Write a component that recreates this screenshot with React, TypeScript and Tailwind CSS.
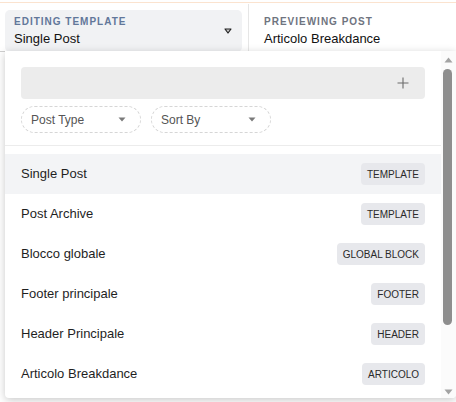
import type { JSX } from "react";

interface TemplateRow {
  name: string;
  kind: string;
}

const ROWS: TemplateRow[] = [
  { name: "Single Post", kind: "Template" },
  { name: "Post Archive", kind: "Template" },
  { name: "Blocco globale", kind: "Global Block" },
  { name: "Footer principale", kind: "Footer" },
  { name: "Header Principale", kind: "Header" },
  { name: "Articolo Breakdance", kind: "Articolo" },
];

function Caret(): JSX.Element {
  return (
    <svg width="8" height="5" viewBox="0 0 8 5" className="shrink-0">
      <path d="M0.5 0.5 H7.5 L4 4.5 Z" fill="#7a7a7a" />
    </svg>
  );
}

function FilterPill({ label }: { label: string }): JSX.Element {
  return (
    <div className="flex h-[27px] w-[120px] items-center justify-between rounded-full border border-dashed border-[#d6d6d6] pl-[9px] pr-[14px] text-[12px] text-[#555]">
      <span>{label}</span>
      <Caret />
    </div>
  );
}

// Scrollbar drawn by hand: the screenshot browser hides native ones
function Scrollbar(): JSX.Element {
  return (
    <div className="flex w-[15px] shrink-0 flex-col items-center bg-[#fbfbfb] pb-[2px] pt-[6px]">
      <svg width="9" height="6" viewBox="0 0 9 6">
        <path d="M4.5 0.5 L8.5 5.5 H0.5 Z" fill="#a3a3a3" />
      </svg>
      <div className="ml-[-2px] mt-[6px] h-[256px] w-[9px] rounded-full bg-[#8e8e8e]" />
      <div className="flex-1" />
      <svg width="9" height="6" viewBox="0 0 9 6" className="mb-[1px]">
        <path d="M0.5 0.5 H8.5 L4.5 5.5 Z" fill="#a3a3a3" />
      </svg>
    </div>
  );
}

export default function App(): JSX.Element {
  return (
    <div
      className="relative h-[402px] w-[456px] overflow-hidden bg-white pt-[2px]"
      style={{ fontFamily: '"Liberation Sans", Arial, sans-serif' }}
    >
      {/* Top bar */}
      <header className="flex h-[49px] border-t border-[#fbe3cf] pl-[5px]">
        <div className="mt-[7px] flex h-[42px] w-[237px] items-start justify-between rounded-[5px] bg-[#f1f2f4] pl-[9px] pr-[10px] pt-[5px]">
          <div className="flex flex-col">
            <span className="text-[10px] font-bold uppercase leading-[14px] tracking-[1px] text-[#62779a]">
              Editing template
            </span>
            <span className="mt-[2px] text-[13px] leading-[16px] text-[#111]">Single Post</span>
          </div>
          <svg width="8" height="6" viewBox="0 0 8 6" className="mt-[13px]">
            <path d="M1 1 H7 L4 5 Z" fill="#c8c8c8" stroke="#222" strokeWidth="1.2" strokeLinejoin="round" />
          </svg>
        </div>
        <div className="ml-[6px] mt-px w-px self-stretch bg-[#e6e6e6]" />
        <div className="flex flex-col pl-[15px] pt-[12px]">
          <span className="text-[10px] font-bold uppercase leading-[14px] tracking-[1px] text-[#6f7480]">
            Previewing post
          </span>
          <span className="mt-[2px] text-[13px] leading-[16px] text-[#111]">Articolo Breakdance</span>
        </div>
      </header>

      <div className="h-px w-[5px] bg-[#cfcfcf]" />

      {/* Dropdown */}
      <div className="absolute left-[5px] top-[51px] flex h-[347px] w-[451px] overflow-hidden rounded-b-[4px] bg-white shadow-[0_2px_8px_rgba(0,0,0,0.22)]">
        <div className="min-w-0 flex-1">
          <div className="px-4 pt-4">
            <div className="flex h-8 items-center justify-end rounded-[4px] bg-[#ececec] pr-[16px]">
              <svg width="12" height="12" viewBox="0 0 12 12">
                <path d="M6 0.5 V11.5 M0.5 6 H11.5" stroke="#6b6b6b" strokeWidth="1.1" />
              </svg>
            </div>
            <div className="mt-[7px] flex gap-[10px]">
              <FilterPill label="Post Type" />
              <FilterPill label="Sort By" />
            </div>
          </div>
          <div className="mt-3 h-px bg-[#ececec]" />
          <ul className="pt-2">
            {ROWS.map((row, i) => (
              <li
                key={row.name}
                className={`flex h-10 items-center justify-between px-4 ${i === 0 ? "bg-[#f3f4f6]" : ""}`}
              >
                <span className="text-[13px] text-[#1f1f1f]">{row.name}</span>
                <span className="flex h-[22px] items-center rounded-[4px] bg-[#e7e8ec] px-[6px] text-[10px] uppercase text-[#2a2a2a]">
                  {row.kind}
                </span>
              </li>
            ))}
          </ul>
        </div>
        <Scrollbar />
      </div>
    </div>
  );
}
